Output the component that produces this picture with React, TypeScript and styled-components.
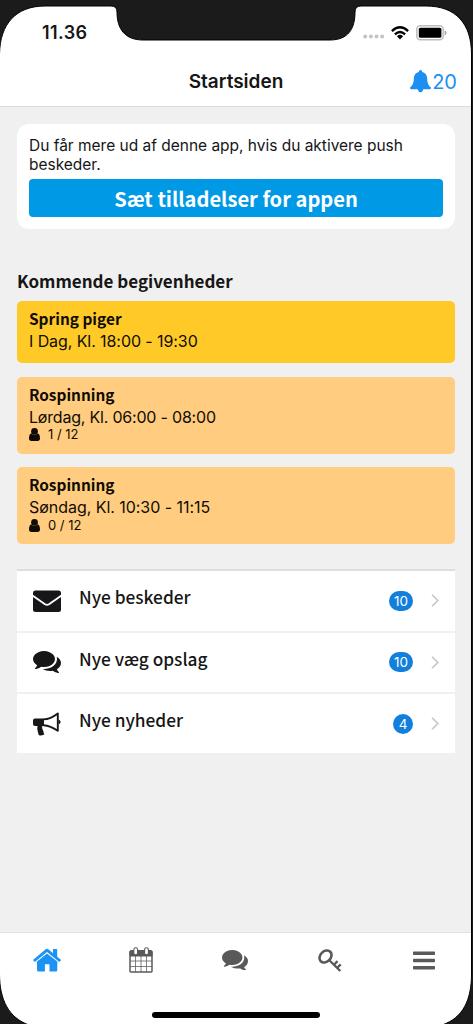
import React from 'react';
import styled, { createGlobalStyle } from 'styled-components';

const ui = "Inter, 'Liberation Sans', sans-serif";
const brand = "'Noto Sans CJK SC', 'Noto Sans', sans-serif";

const GlobalStyle = createGlobalStyle`
  * { box-sizing: border-box; }
  body { margin: 0; background: #f0f0f0; overflow: hidden; }
`;

const Screen = styled.div`
  position: relative;
  width: 473px;
  height: 1024px;
  display: flex;
  flex-direction: column;
  background: #f0f0f0;
  color: #161616;
  font-family: ${ui};
  overflow: hidden;
`;

const Bezel = styled.svg`
  position: absolute;
  inset: 0;
  pointer-events: none;
`;

const Header = styled.header`
  height: 107px;
  background: #fff;
  border-bottom: 1px solid #dcdcdc;
  flex: none;
`;

const StatusBar = styled.div`
  height: 57px;
  padding: 8px 26px 0 42px;
  display: flex;
  align-items: center;
  justify-content: space-between;
`;

const Clock = styled.span`
  font-size: 18px;
  line-height: 20px;
  font-weight: 600;
  letter-spacing: 0.4px;
`;

const StatusIcons = styled.div`
  display: flex;
  align-items: center;
`;

const NavBar = styled.div`
  height: 49px;
  padding: 0 16px 0 15px;
  display: grid;
  grid-template-columns: 1fr auto 1fr;
  align-items: center;
`;

const Title = styled.h1`
  grid-column: 2;
  margin: 0;
  font-size: 19px;
  line-height: 24px;
  font-weight: 600;
`;

const Alerts = styled.div`
  justify-self: end;
  display: flex;
  align-items: center;
  gap: 1px;
  color: #1b8ff2;
  font-size: 20px;
  line-height: 24px;
`;

const Content = styled.main`
  flex: 1;
  padding: 17px 18px 0 17px;
`;

const Card = styled.section`
  height: 105px;
  padding: 12px 12px 0;
  border-radius: 12px;
  background: #fff;
`;

const CardText = styled.p`
  margin: 0 0 5px;
  font-size: 15.5px;
  line-height: 19px;
  letter-spacing: -0.015px;
`;

const PrimaryButton = styled.button`
  display: block;
  width: 100%;
  height: 38px;
  padding: 0;
  border: 0;
  border-radius: 4px;
  background: #0099e5;
  color: #fff;
  font: 700 20.1px/39px ${brand};
`;

const SectionTitle = styled.h2`
  margin: 40px 0 8px;
  font: 700 17px/24px ${brand};
`;

const Events = styled.div`
  display: flex;
  flex-direction: column;
  gap: 13.5px;
`;

const EventCard = styled.article<{ $color: string; $height: number }>`
  height: ${(p) => p.$height}px;
  padding: 6px 12px 0;
  border-radius: 5px;
  background: ${(p) => p.$color};
  color: #100c04;
`;

const EventName = styled.div`
  font: 700 15.4px/22px ${brand};
`;

const EventTime = styled.div<{ $tracking: number }>`
  margin-top: 1px;
  font-size: 16px;
  line-height: 23px;
  letter-spacing: ${(p) => p.$tracking}px;
`;

const Attendance = styled.div`
  display: flex;
  align-items: center;
  gap: 8px;
  margin-top: -0.5px;
  font-size: 13px;
  line-height: 13px;
`;

const List = styled.ul`
  margin: 25px 0 0;
  padding: 0;
  list-style: none;
  border-top: 2px solid #dedede;
`;

const ListRow = styled.li`
  height: 61.5px;
  padding: 0 16px;
  display: flex;
  align-items: center;
  background: #fff;
  border-bottom: 2px solid #f0f0f0;
  &:last-child { border-bottom: 0; height: 59px; }
`;

const RowLabel = styled.span`
  flex: 1;
  margin: -7px 0 0 18px;
  font: 500 17.3px/24px ${brand};
`;

const Badge = styled.span`
  min-width: 20px;
  height: 20px;
  padding: 0 5px;
  margin-right: 18px;
  border-radius: 10px;
  background: #127fdc;
  color: #fff;
  font-size: 13.5px;
  line-height: 20px;
  text-align: center;
`;

const TabBar = styled.nav`
  height: 92px;
  padding: 0 2px 0 0;
  display: grid;
  grid-template-columns: repeat(5, 1fr);
  justify-items: center;
  background: #fff;
  border-top: 1px solid #e2e2e2;
  flex: none;
`;

const Tab = styled.a<{ $active?: boolean }>`
  height: 54px;
  display: flex;
  align-items: center;
  color: ${(p) => (p.$active ? '#1b93f5' : '#595959')};
`;

const HomeIndicator = styled.div`
  position: absolute;
  left: 152px;
  top: 1012px;
  width: 168px;
  height: 6px;
  border-radius: 3px;
  background: #000;
`;

const Dots = () => (
  <svg width="22" height="20" viewBox="0 0 22 20" fill="#c4c4c4">
    {[2.2, 7.9, 13.5, 19.1].map((x) => <circle key={x} cx={x} cy="13.500" r="2" />)}
  </svg>
);

const WifiSvg = styled.svg`
  margin-left: 6px;
`;

const Wifi = () => (
  <WifiSvg width="18" height="14" viewBox="0 0 18 14" fill="none" stroke="#000" strokeWidth="2.3">
    <path d="M.9 5.1Q9-2.500 17.100 5.100M3.900 8.300Q9 3.600 14.100 8.300" />
    <path d="M5.900 10.200Q9 7.300 12.100 10.200L9 13.400Z" fill="#000" stroke="none" />
  </WifiSvg>
);

const BatterySvg = styled.svg`
  margin-left: 7px;
`;

const Battery = () => (
  <BatterySvg width="31" height="16" viewBox="0 0 31 16">
    <rect x=".8" y=".8" width="26.400" height="14" rx="3.500" fill="#fff" stroke="#bdbdbd" strokeWidth="1.500" />
    <rect x="2.800" y="2.800" width="22.600" height="10" rx="1.500" />
    <path d="M28.600 5.300q2 .7 2 2.600t-2 2.600z" fill="#aaa" />
  </BatterySvg>
);

const Bell = () => (
  <svg width="21" height="23" viewBox="0 0 21 23" fill="currentColor">
    <path d="M10.500 0c-1 0-1.600.9-1.700 2C5.900 2.700 4.100 4.800 3.900 7.700c-.2 4.500-.8 7.200-3.600 9.600-.6.7-.2 1.900.8 1.900h6.100c.5 0 .8.400 1 1 .5 2.700 4.100 2.700 4.600 0 .2-.6.5-1 1-1h6.100c1 0 1.400-1.200.8-1.900-2.800-2.400-3.400-5.100-3.600-9.600-.2-2.900-2-5-4.900-5.700-.1-1.100-.7-2-1.700-2z" />
  </svg>
);

const Person = () => (
  <svg width="11" height="13" viewBox="0 0 11 13" fill="currentColor">
    <circle cx="5.500" cy="3.400" r="3.400" />
    <path d="M2.300 5.300C.7 5.800 0 8 0 10.500 0 12.100.9 13 2.300 13h6.400c1.400 0 2.300-.9 2.300-2.500 0-2.500-.7-4.700-2.300-5.200-.8.900-2 1.600-3.200 1.600s-2.400-.7-3.200-1.600z" />
  </svg>
);

const Envelope = () => (
  <svg width="28" height="22" viewBox="0 0 28 22" fill="#171719">
    <rect y=".5" width="28" height="21.500" rx="2.500" />
    <path d="M-.5 5.500L12 14.200q2 1.300 4 0L28.500 5.500" fill="none" stroke="#fff" strokeWidth="1.900" />
  </svg>
);

const Comments = ({ size = 28 }: { size?: number }) => (
  <svg width={size} height={size * 0.79} viewBox="0 256 1792 1408" fill="currentColor">
    <path d="M1408 768q0 139-94 257t-256.500 186.500-353.500 68.500q-86 0-176-16-124 88-278 128-36 9-86 16h-3q-11 0-20.500-8t-11.500-21q-1-3-1-6.500t.5-6.500 2-6l2.500-5t3.500-5.500 4-5 4.500-5 4-4.500q5-6 23-25t26-29.500 22.500-29 25-38.500 20.500-44q-124-72-195-177t-71-224q0-139 94-257t256.500-186.500 353.500-68.500 353.500 68.500 256.500 186.500 94 257zm384 256q0 120-71 224.500t-195 176.500q10 24 20.500 44t25 38.500 22.500 29 26 29.500 23 25q1 1 4 4.500t4.500 5 4 5 3.500 5.500l2.500 5t2 6 .5 6.500-1 6.500q-3 14-13 22t-22 7q-50-7-86-16-154-40-278-128-90 16-176 16-271 0-472-132 58 4 88 4 161 0 309-45t264-129q125-92 192-212t67-254q0-77-23-152 129 71 204 178t75 230z" />
  </svg>
);

const Bullhorn = () => (
  <svg width="28" height="24" viewBox="0 0 28 24" fill="#171719">
    <path d="M2 6.500h9v7.600H9.200c-.3 2 .2 3.200.9 4.500.7 1.300.1 2.400 1.300 3.500-1.100 1.600-4.100 1.800-5.700.9C5 20 3.700 17.500 4.500 14.100H2q-2 0-2-2V8.500q0-2 2-2z" />
    <path d="M10.500 7.400Q17.500 7 24.800 1.400V18.800Q17.500 13.700 10.500 13.200" fill="none" stroke="#171719" strokeWidth="1.900" strokeLinejoin="round" />
    <path d="M25.500 7.700c1.100.2 2.100 1.100 2.100 2.300s-1 2.100-2.100 2.300z" />
  </svg>
);

const Chevron = () => (
  <svg width="8" height="13" viewBox="0 0 8 13" fill="none" stroke="#c5c5ca" strokeWidth="1.600">
    <path d="M1 .8l5.800 5.700L1 12.200" />
  </svg>
);

const Home = () => (
  <svg width="28" height="24" viewBox="0 0 28 24" fill="currentColor">
    <path d="M4 13.600L14 5.400l10.300 8.200V22q0 1.500-1.500 1.500h-6.300v-7.200h-4.600v7.200H5.500Q4 23.500 4 22z" />
    <path d="M.5 11.600L12.700 1.300q1.300-1 2.600 0L20 5.200V1h4.200v7.700l3.400 2.900q.5.600 0 1.200l-.8.800q-.5.400-1.100 0L14 3.900 2.400 13.600q-.6.400-1.100 0l-.8-.8q-.5-.6 0-1.200z" />
  </svg>
);

const Calendar = () => (
  <svg width="24" height="26" viewBox="0 0 24 26" fill="none" stroke="currentColor">
    <path d="M1 9V5q0-1.500 1.500-1.500h19Q23 3.500 23 5v4z" fill="currentColor" />
    <rect x="1" y="4" width="22" height="21" rx="1" strokeWidth="1.500" />
    <path d="M6.500 9v16M12 9v16M17.500 9v16M1 14h22M1 19.500h22" strokeWidth="1" opacity=".75" />
    <rect x="4.800" y=".8" width="3.800" height="7" rx="1.900" fill="#fff" strokeWidth="1.100" />
    <rect x="15.600" y=".8" width="3.800" height="7" rx="1.900" fill="#fff" strokeWidth="1.100" />
  </svg>
);

const KeyIcon = () => (
  <svg width="24" height="23" viewBox="0 0 24 23" fill="none" stroke="currentColor">
    <ellipse cx="7.500" cy="7.500" rx="6.700" ry="5.200" strokeWidth="2.600" transform="rotate(-45 7.500 7.500)" />
    <path d="M10.500 10.500L22.300 22M16.300 15.500l3.200-3.300M19.500 18.500l3.200-3.200" strokeWidth="2.400" />
  </svg>
);

const Menu = () => (
  <svg width="22" height="19" viewBox="0 0 22 19" fill="currentColor">
    <rect y=".5" width="22" height="3.400" rx=".7" />
    <rect y="7.800" width="22" height="3.400" rx=".7" />
    <rect y="15.100" width="22" height="3.400" rx=".7" />
  </svg>
);

const events = [
  { name: 'Spring piger', time: 'I Dag, Kl. 18:00 - 19:30', tracking: -0.08, color: '#ffca28', height: 62 },
  { name: 'Rospinning', time: 'Lørdag, Kl. 06:00 - 08:00', seats: '1 / 12', tracking: -0.2, color: '#ffcc80', height: 77 },
  { name: 'Rospinning', time: 'Søndag, Kl. 10:30 - 11:15', seats: '0 / 12', tracking: -0.04, color: '#ffcc80', height: 77 },
];

const news = [
  { icon: <Envelope />, label: 'Nye beskeder', count: 10 },
  { icon: <Comments />, label: 'Nye væg opslag', count: 10 },
  { icon: <Bullhorn />, label: 'Nye nyheder', count: 4 },
];

export default function App() {
  return (
    <Screen>
      <GlobalStyle />
      <Header>
        <StatusBar>
          <Clock>11.36</Clock>
          <StatusIcons><Dots /><Wifi /><Battery /></StatusIcons>
        </StatusBar>
        <NavBar>
          <Title>Startsiden</Title>
          <Alerts><Bell /><span>20</span></Alerts>
        </NavBar>
      </Header>
      <Content>
        <Card>
          <CardText>Du får mere ud af denne app, hvis du aktivere push<br />beskeder.</CardText>
          <PrimaryButton>Sæt tilladelser for appen</PrimaryButton>
        </Card>
        <SectionTitle>Kommende begivenheder</SectionTitle>
        <Events>
          {events.map((e) => (
            <EventCard key={e.time} $color={e.color} $height={e.height}>
              <EventName>{e.name}</EventName>
              <EventTime $tracking={e.tracking}>{e.time}</EventTime>
              {e.seats && <Attendance><Person /><span>{e.seats}</span></Attendance>}
            </EventCard>
          ))}
        </Events>
        <List>
          {news.map((n) => (
            <ListRow key={n.label}>
              {n.icon}
              <RowLabel>{n.label}</RowLabel>
              <Badge>{n.count}</Badge>
              <Chevron />
            </ListRow>
          ))}
        </List>
      </Content>
      <TabBar>
        <Tab $active><Home /></Tab>
        <Tab><Calendar /></Tab>
        <Tab><Comments size={26} /></Tab>
        <Tab><KeyIcon /></Tab>
        <Tab><Menu /></Tab>
      </TabBar>
      <HomeIndicator />
      <Bezel width="473" height="1024" viewBox="0 0 473 1024">
        <path
          fill="#1b1b1b"
          stroke="#000"
          strokeWidth="1"
          fillRule="evenodd"
          d="M-2-2H475V1026H-2ZM-.5 54C0 24 16 6 45 6H111Q117 6 117 12C117 29 125 40 143 40H330C348 40 355 29 355 12Q355 6 361 6H426C456 6 471.500 24 471.500 54V974C471.500 1000 463 1018 442 1025H29C9 1018-.5 1000-.5 974Z"
        />
      </Bezel>
    </Screen>
  );
}
